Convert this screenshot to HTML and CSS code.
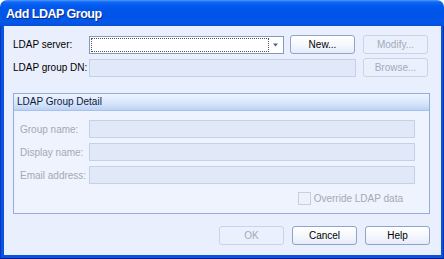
FILE: index.html
```html
<!DOCTYPE html>
<html>
<head>
<meta charset="utf-8">
<link rel="stylesheet" href="styles.css">
</head>
<body>
<div class="window">
  <div class="titlebar"><span class="title">Add LDAP Group</span></div>
  <div class="frame">
    <div class="content">
      <div class="row row1">
        <span class="label">LDAP server:</span>
        <div class="combo">
          <div class="combo-focus"></div>
          <svg class="arrow" width="7" height="4" viewBox="0 0 7 4"><path d="M1 0.5h5L3.5 3.5z" fill="#4d6185"/></svg>
        </div>
        <button class="btn btn-new">New...</button>
        <button class="btn btn-disabled">Modify...</button>
      </div>
      <div class="row row2">
        <span class="label">LDAP group DN:</span>
        <div class="field field-dn"></div>
        <button class="btn btn-disabled">Browse...</button>
      </div>
      <div class="group">
        <div class="group-header">LDAP Group Detail</div>
        <div class="group-body">
          <div class="grow"><span class="glabel">Group name:</span><div class="field gfield"></div></div>
          <div class="grow"><span class="glabel">Display name:</span><div class="field gfield"></div></div>
          <div class="grow"><span class="glabel">Email address:</span><div class="field gfield"></div></div>
          <div class="check-row"><span class="checkbox"></span><span class="check-label">Override LDAP data</span></div>
        </div>
      </div>
      <div class="footer">
        <button class="btn btn-disabled">OK</button>
        <button class="btn">Cancel</button>
        <button class="btn">Help</button>
      </div>
    </div>
  </div>
</div>
</body>
</html>
```
FILE: styles.css
```css
html, body {
  margin: 0;
  padding: 0;
  background: #ffffff;
}
.window {
  width: 444px;
  height: 259px;
  display: flex;
  flex-direction: column;
  border-radius: 7px 7px 0 0;
  overflow: hidden;
  font-family: "Liberation Sans", Arial, sans-serif;
  font-size: 10px;
  color: #000;
  white-space: nowrap;
}
.titlebar {
  height: 26px;
  flex: none;
  background: linear-gradient(to bottom, #4a9cff 0px, #1368f5 2px, #0058ee 6px, #0053e6 16px, #0359eb 22px, #0a4fd4 26px);
  display: flex;
  align-items: center;
  padding-left: 6px;
}
.title {
  color: #fff;
  font-weight: bold;
  font-size: 12.5px;
  letter-spacing: -0.5px;
  text-shadow: 1px 1px 0 #0a2a8a;
  margin-top: 1px;
}
.frame {
  flex: 1;
  display: flex;
  background: #0a52e0;
  border-left: 1px solid #0737c7;
  border-right: 1px solid #0033b0;
  border-bottom: 1px solid #001a8c;
  padding: 0 3px 3px 3px;
}
.content {
  flex: 1;
  background: #e9effc;
  padding: 9px 11px 0 9px;
  display: flex;
  flex-direction: column;
}
.row {
  display: flex;
  align-items: center;
  height: 19px;
}
.row2 {
  margin-top: 4px;
}
.label {
  width: 76px;
  flex: none;
}
.combo {
  width: 193px;
  height: 16px;
  border: 1px solid #7f9db9;
  background: #fff;
  position: relative;
  display: flex;
  align-items: center;
  margin-right: 6px;
}
.combo-focus {
  position: absolute;
  left: 1px;
  top: 1px;
  width: 176px;
  height: 12px;
  border: 1px dotted #555;
}
.arrow {
  position: absolute;
  right: 4px;
  top: 6px;
}
.field {
  height: 16px;
  border: 1px solid #c3d0ec;
  background: #e1e9f9;
}
.field-dn {
  width: 265px;
  margin-right: 7px;
}
.btn {
  width: 65px;
  height: 19px;
  padding: 0;
  margin: 0;
  border: 1px solid #8fa4c6;
  border-radius: 3px;
  background: linear-gradient(to bottom, #ffffff 0%, #f6f8fe 50%, #e5ebf8 100%);
  font-family: "Liberation Sans", Arial, sans-serif;
  font-size: 10px;
  color: #000;
  flex: none;
}
.btn-new {
  margin-right: 8px;
}
.btn-disabled {
  border-color: #c9d4ea;
  background: #eaf0fc;
  color: #a3abbb;
}
.group {
  margin-top: 16px;
  width: 415px;
  height: 119px;
  border: 1px solid #92aee0;
  background: #eef3fd;
  display: flex;
  flex-direction: column;
}
.group-header {
  height: 16px;
  line-height: 16px;
  padding-left: 3px;
  background: linear-gradient(to bottom, #eef4ff 0%, #d6e5fb 60%, #bcd3f5 100%);
  border-bottom: 1px solid #a9c1ea;
  color: #0c1a3a;
}
.group-body {
  padding: 9px 14px 0 6px;
  display: flex;
  flex-direction: column;
}
.grow {
  display: flex;
  align-items: center;
  height: 18px;
  margin-bottom: 5px;
}
.glabel {
  width: 69px;
  flex: none;
  color: #a4a9b5;
}
.gfield {
  flex: 1;
}
.check-row {
  display: flex;
  align-items: center;
  justify-content: flex-end;
  margin-top: 3px;
  padding-right: 12px;
  height: 13px;
}
.checkbox {
  width: 11px;
  height: 11px;
  border: 1px solid #c6cee0;
  background: #edf1f9;
  margin-right: 3px;
}
.check-label {
  color: #a4a9b5;
}
.footer {
  margin-top: 12px;
  display: flex;
  justify-content: flex-end;
  gap: 8px;
}
```
